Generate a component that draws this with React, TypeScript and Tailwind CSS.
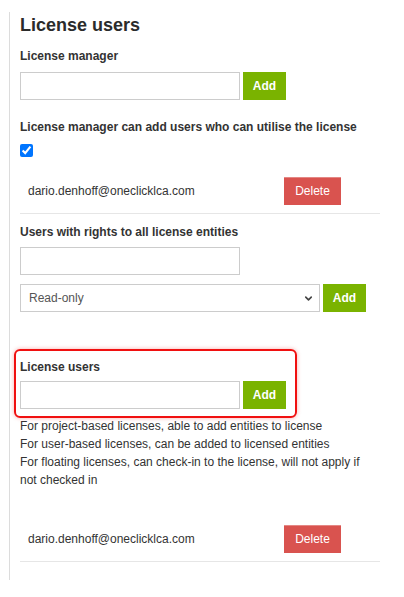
import { ChevronDown } from "lucide-react";

const font = { fontFamily: '"Liberation Sans", Arial, sans-serif' };

function AddButton() {
  return (
    <button className="h-[28px] w-[43px] bg-[#7ab300] text-[12px] font-bold text-white">Add</button>
  );
}

function TextInput({ width = "w-[220px]" }: { width?: string }) {
  return <input type="text" className={`h-[28px] ${width} border border-[#cccccc] bg-white px-2 text-[12px] outline-none`} />;
}

function UserRow({ email, className = "" }: { email: string; className?: string }) {
  return (
    <div className={`flex w-[360px] items-center border-b border-[#e6e6e6] pb-[8px] ${className}`}>
      <span className="w-[264px] pl-[8px] text-[12px] text-[#333]">{email}</span>
      <button className="h-[28px] w-[57px] bg-[#d9534f] text-[12px] text-white shadow-[inset_0_1px_0_rgba(255,255,255,0.3)]">
        Delete
      </button>
    </div>
  );
}

// Panel de usuarios de licencia: gestores, usuarios con acceso total y usuarios.
export default function App() {
  return (
    <div className="min-h-[597px] bg-white pt-[12px] text-[#333]" style={font}>
      <div className="ml-[9px] w-[380px] border-l border-[#dcdcdc] pb-[18px] pl-[10px]">
        <h1 className="pt-[3px] text-[18px] leading-[20px] font-bold text-[#2b2b2b]">License users</h1>

        <div className="mt-[13px] text-[12px] leading-[16px] font-bold">License manager</div>
        <div className="mt-[8px] flex gap-[3px]">
          <TextInput />
          <AddButton />
        </div>

        <div className="mt-[19px] text-[12px] leading-[16px] font-bold">
          License manager can add users who can utilise the license
        </div>
        <input type="checkbox" defaultChecked className="mt-[9px] block h-[13px] w-[13px] accent-[#0075ff]" />

        <UserRow email="dario.denhoff@oneclicklca.com" className="mt-[20px]" />

        <div className="mt-[10px] text-[12px] leading-[16px] font-bold">Users with rights to all license entities</div>
        <div className="mt-[7px]">
          <TextInput />
        </div>
        <div className="mt-[9px] flex gap-[3px]">
          <div className="relative h-[28px] w-[300px]">
            <select
              defaultValue="read"
              className="h-full w-full appearance-none border border-[#cccccc] bg-white pl-[8px] text-[12px] text-[#555] outline-none"
            >
              <option value="read">Read-only</option>
              <option value="edit">Edit</option>
            </select>
            <ChevronDown
              size={11}
              strokeWidth={3.5}
              className="pointer-events-none absolute top-[9px] right-[6px] text-[#444]"
            />
          </div>
          <AddButton />
        </div>

        <div className="relative mt-[47px]">
          <div className="pointer-events-none absolute -top-[10px] -left-[6px] h-[69px] w-[283px] rounded-[6px] border-2 border-[#f01010] shadow-[0_0_4px_rgba(240,16,16,0.35)]" />
          <div className="text-[12px] leading-[16px] font-bold">License users</div>
          <div className="mt-[6px] flex gap-[3px]">
            <TextInput />
            <AddButton />
          </div>
        </div>

        <div className="mt-[8px] w-[345px] text-[12px] leading-[18px]">
          <p>For project-based licenses, able to add entities to license</p>
          <p>For user-based licenses, can be added to licensed entities</p>
          <p>For floating licenses, can check-in to the license, will not apply if not checked in</p>
        </div>

        <UserRow email="dario.denhoff@oneclicklca.com" className="mt-[36px]" />
      </div>
    </div>
  );
}
